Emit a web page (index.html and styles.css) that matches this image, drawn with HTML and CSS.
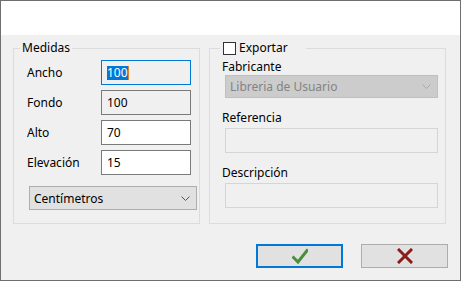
FILE: index.html
```html
<!DOCTYPE html>
<html lang="es">
<head>
    <meta charset="UTF-8">
    <meta name="viewport" content="width=device-width, initial-scale=1.0">
    <title>Medidas</title>
    <link rel="stylesheet" href="styles.css">
</head>
<body>
    <div class="window">
        <div class="titlebar"></div>

        <div class="content">
            <div class="groups">
                <!-- medidas -->
                <fieldset class="group group-left">
                    <legend>Medidas</legend>
                    <div class="inner">
                        <div class="rows">
                            <span class="lbl">Ancho</span>
                            <div class="box box-ro box-focus"><span class="sel">100</span><span class="caret"></span></div>

                            <span class="lbl">Fondo</span>
                            <div class="box box-ro">100</div>

                            <span class="lbl">Alto</span>
                            <div class="box">70</div>

                            <span class="lbl">Elevación</span>
                            <div class="box">15</div>
                        </div>

                        <div class="select">
                            <span>Centímetros</span>
                            <svg width="9" height="5" viewBox="0 0 9 5"><path d="M0.5 0.5 L4.5 4.5 L8.5 0.5" fill="none" stroke="#555" stroke-width="1"/></svg>
                        </div>
                    </div>
                </fieldset>

                <!-- exportar -->
                <fieldset class="group group-right">
                    <legend><span class="check"></span>Exportar</legend>
                    <div class="inner inner-right">
                        <div class="cap">Fabricante</div>
                        <div class="select select-off">
                            <span>Libreria de Usuario</span>
                            <svg width="9" height="5" viewBox="0 0 9 5"><path d="M0.5 0.5 L4.5 4.5 L8.5 0.5" fill="none" stroke="#aaa" stroke-width="1"/></svg>
                        </div>

                        <div class="cap cap-gap">Referencia</div>
                        <div class="box box-off"></div>

                        <div class="cap cap-gap">Descripción</div>
                        <div class="box box-off"></div>
                    </div>
                </fieldset>
            </div>

            <div class="actions">
                <button type="button" class="btn btn-ok">
                    <svg width="16" height="16" viewBox="0 0 16 16"><path d="M1.5 9.5 L6 14 L15 2.5" fill="none" stroke="#4a8d3b" stroke-width="3" stroke-linecap="square"/></svg>
                </button>
                <button type="button" class="btn">
                    <svg width="16" height="16" viewBox="0 0 16 16"><path d="M2 2 L14 14 M14 2 L2 14" fill="none" stroke="#8b1c1c" stroke-width="3" stroke-linecap="square"/></svg>
                </button>
            </div>
        </div>
    </div>
</body>
</html>
```

FILE: styles.css
```css
body {
    margin: 0;
    font-family: 'Noto Sans', 'Open Sans', sans-serif;
    font-size: 12px;
    color: #000;
}

.window {
    width: 461px;
    height: 281px;
    box-sizing: border-box;
    border: 1px solid #6f6f6f;
    display: flex;
    flex-direction: column;
    background-color: #f0f0f0;
}

.titlebar {
    height: 34px;
    background-color: #fff;
}

.content {
    flex: 1;
    padding: 5px 0 0 12px;
}

.groups {
    display: flex;
    gap: 9px;
}

.group {
    margin: 0;
    padding: 0;
    border: 1px solid #dcdcdc;
    min-width: 0;
    box-sizing: border-box;
    height: 184px;
}

.group-left {
    width: 187px;
}

.group-right {
    width: 237px;
}

legend {
    line-height: 16px;
    padding: 0 2px;
    margin-left: 6px;
}

.group-right legend {
    display: flex;
    align-items: center;
    margin-left: 10px;
    padding: 0 18px 0 3px;
}

.check {
    width: 11px;
    height: 11px;
    border: 1px solid #333;
    background-color: #fff;
    margin-right: 3px;
}

.inner {
    padding: 4px 8px 0 13px;
}

.rows {
    display: grid;
    grid-template-columns: 1fr 90px;
    row-gap: 5px;
    align-items: center;
}

.box {
    height: 25px;
    box-sizing: border-box;
    border: 1px solid #7a7a7a;
    background-color: #fff;
    padding: 0 5px;
    line-height: 23px;
    display: flex;
    align-items: center;
}

.box-ro {
    background-color: #f0f0f0;
}

.box-focus {
    border-color: #0078d7;
}

.sel {
    background-color: #0078d7;
    color: #fff;
    line-height: 14px;
}

.caret {
    width: 1px;
    height: 14px;
    background-color: #d9822b;
}

.select {
    height: 24px;
    box-sizing: border-box;
    border: 1px solid #adadad;
    background-color: #e1e1e1;
    margin: 11px -6px 0 2px;
    padding: 0 6px 0 4px;
    display: flex;
    align-items: center;
    justify-content: space-between;
}

.inner-right {
    padding: 3px 7px 0 12px;
}

.cap {
    line-height: 16px;
}

.cap-gap {
    margin-top: 12px;
}

.inner-right .select {
    margin: 0 0 0 3px;
    height: 23px;
    background-color: #cccccc;
    border-color: #bfbfbf;
    color: #838383;
}

.box-off {
    margin: 2px 0 0 3px;
    background-color: #f0f0f0;
    border-color: #d5d5d5;
}

.actions {
    display: flex;
    justify-content: flex-end;
    gap: 18px;
    padding: 20px 12px 0 0;
}

.btn {
    width: 87px;
    height: 24px;
    padding: 0;
    border: 1px solid #adadad;
    background-color: #e1e1e1;
    display: flex;
    align-items: center;
    justify-content: center;
}

.btn-ok {
    border: 2px solid #0078d7;
}
```
